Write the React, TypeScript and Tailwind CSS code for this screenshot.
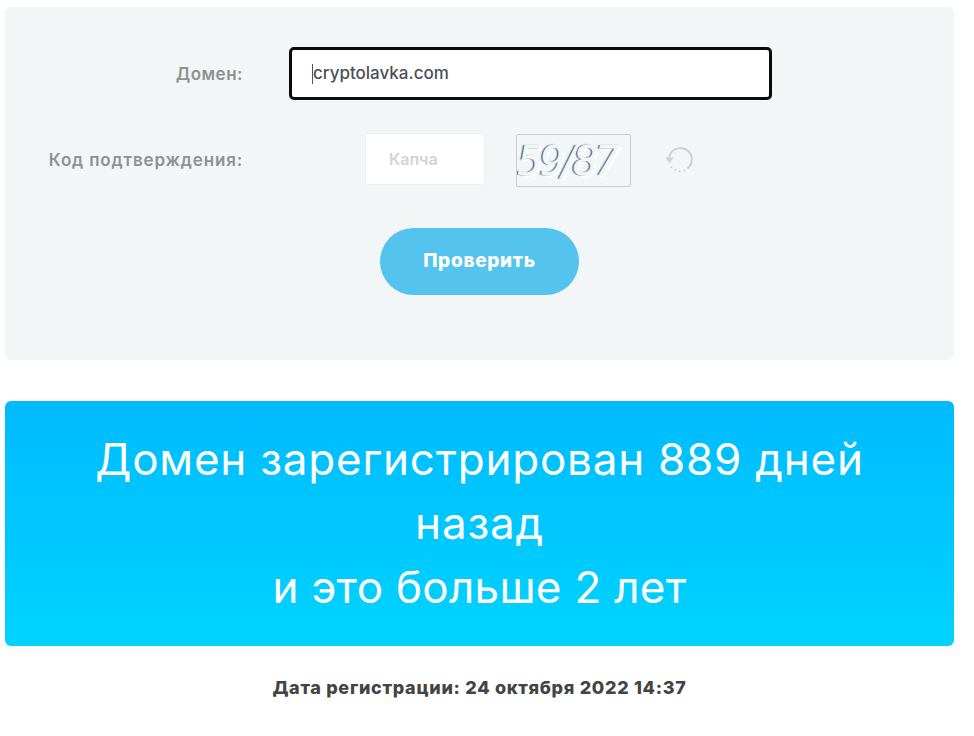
import React from "react";

export default function App() {
  return (
    <div className="w-[974px] h-[736px] overflow-hidden bg-white pt-[7px] pl-[5px] font-['Inter','Liberation_Sans',sans-serif]">
      <div className="w-[949px] h-[353px] rounded-[6px] bg-[#f3f6f7] pt-[40px]">
        <div className="flex items-center">
          <label className="w-[238px] pt-[2px] text-right text-[17px] font-semibold tracking-[0.5px] text-[#8d9292]">Домен:</label>
          <div className="ml-[46px] flex h-[53px] w-[483px] items-center rounded-[5px] border-[3px] border-[#0b0b0b] bg-white pl-[20px] text-[17px] font-medium text-[#4a4f5a]">
            <span className="h-[20px] w-px bg-[#555]" />
            <span>cryptolavka.com</span>
          </div>
        </div>
        <div className="mt-[33px] flex h-[54px] items-start">
          <label className="mt-[15px] w-[238px] text-right text-[17px] font-semibold tracking-[0.85px] text-[#8d9292]">Код подтверждения:</label>
          <div className="ml-[122px] flex h-[52px] w-[120px] items-center rounded-[3px] border border-[#eef1f3] bg-white pl-[23px] text-[16px] font-semibold text-[#cfd3da]">
            Капча
          </div>
          <div className="ml-[31px] mt-[1px] flex h-[53px] w-[115px] items-center overflow-hidden rounded-[2px] border border-[#c9cccc] bg-[#f3f6f7] font-['DejaVu_Sans',sans-serif] text-[40px] font-extralight italic leading-none tracking-[-3px] text-[#f3f6f7] [text-shadow:-1.5px_0_1px_#666,1.5px_1.5px_0_#fff]">
            59/87
          </div>
          <svg className="ml-[33px] mt-[12px]" width="30" height="30" viewBox="0 0 30 30" fill="none" stroke="#ced2d5" strokeWidth="2">
            <path d="M5 12.5A11.5 11.5 0 1 1 23.5 23.5" />
            <path d="M21 25.2A11.5 11.5 0 0 1 5.5 19" strokeDasharray="1.5 3.2" />
            <path d="M1.5 12.5h8l-4 6z" fill="#ced2d5" stroke="none" />
          </svg>
        </div>
        <button className="mx-auto mt-[41px] block h-[67px] w-[199px] rounded-full bg-[#54c3ee] text-[19px] font-extrabold tracking-[0.7px] text-white">
          Проверить
        </button>
      </div>
      <div className="mt-[41px] flex h-[245px] w-[949px] flex-col rounded-[6px] bg-gradient-to-b from-[#00bbff] to-[#00d3ff] pt-[26px] text-center text-[44px] leading-[64px] text-white">
        <span className="tracking-[0.77px]">Домен зарегистрирован 889 дней</span>
        <span className="tracking-[0.8px]">назад</span>
        <span className="tracking-[0.28px]">и это больше 2 лет</span>
      </div>
      <p className="mt-[30px] w-[949px] text-center text-[18px] font-extrabold leading-[24px] tracking-[0.7px] text-[#444444]">
        Дата регистрации: 24 октября 2022 14:37
      </p>
    </div>
  );
}
